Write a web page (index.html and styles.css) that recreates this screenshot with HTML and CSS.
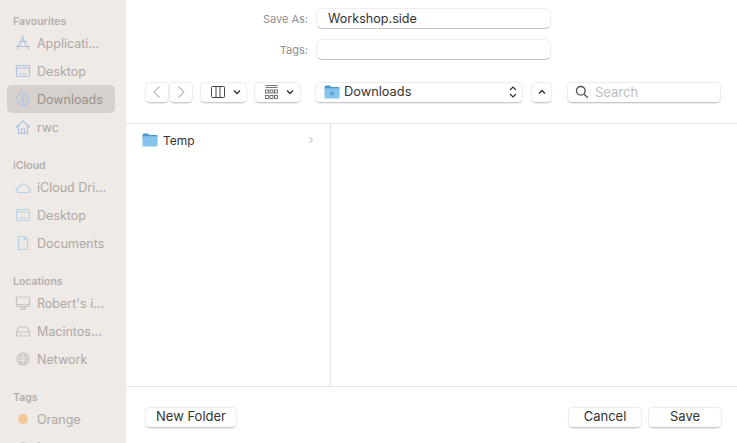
FILE: index.html
```html
<!DOCTYPE html>
<html lang="en">
<head>
    <meta charset="UTF-8">
    <title>Save As</title>
    <link rel="stylesheet" href="styles.css">
</head>
<body>
    <div class="dialog">
        <aside class="sidebar">
            <div class="section">
                <h2>Favourites</h2>
                <div class="item">
                    <svg class="side-icon blue" viewBox="0 0 18 18"><path d="M9.5 2.5 L4.5 12.5 M7.5 2.5 L13 12.5 M2 12.5 H16 M5 7.5 H13 M3 15.5 L4.5 12.5 M15 15.5 L13 12.5"/></svg>
                    <span>Applicati...</span>
                </div>
                <div class="item">
                    <svg class="side-icon blue" viewBox="0 0 18 18"><rect x="2.5" y="3.5" width="13" height="11" rx="1.5"/><path d="M3 6 H15 M5.5 12 H12.5"/></svg>
                    <span>Desktop</span>
                </div>
                <div class="item selected">
                    <svg class="side-icon blue" viewBox="0 0 18 18"><circle cx="9" cy="9" r="6"/><path d="M9 5.5 V12 M6.5 9.7 L9 12.2 L11.5 9.7"/></svg>
                    <span>Downloads</span>
                </div>
                <div class="item">
                    <svg class="side-icon blue" viewBox="0 0 18 18"><path d="M2 9.5 L9 3 L16 9.5 M4.5 8 V15.5 H13.5 V8 M7.5 15.5 V11 H10.5 V15.5"/></svg>
                    <span>rwc</span>
                </div>
            </div>
            <div class="section">
                <h2>iCloud</h2>
                <div class="item">
                    <svg class="side-icon sky" viewBox="0 0 18 18"><path d="M5 14.5 H13.5 C17 14.5 17 10 14 9.5 C13.8 6.5 10 4.5 7.5 7.5 C5.5 6.8 4.5 8.5 4.7 9.7 C1.2 10.3 1.5 14.5 5 14.5 Z"/></svg>
                    <span>iCloud Dri...</span>
                </div>
                <div class="item">
                    <svg class="side-icon sky" viewBox="0 0 18 18"><rect x="2.5" y="3.5" width="13" height="11" rx="1.5"/><path d="M3 6 H15 M5.5 12 H12.5"/></svg>
                    <span>Desktop</span>
                </div>
                <div class="item">
                    <svg class="side-icon sky" viewBox="0 0 18 18"><path d="M4.5 2.5 H10.5 L13.5 5.5 V15.5 H4.5 Z M10.5 2.5 V5.5 H13.5"/></svg>
                    <span>Documents</span>
                </div>
            </div>
            <div class="section">
                <h2>Locations</h2>
                <div class="item">
                    <svg class="side-icon grey" viewBox="0 0 18 18"><rect x="2.5" y="3" width="13" height="9.5" rx="1"/><path d="M2.5 10.5 H15.5 M7.5 12.5 V15 M10.5 12.5 V15 M6 15.2 H12"/></svg>
                    <span>Robert's i...</span>
                </div>
                <div class="item">
                    <svg class="side-icon grey" viewBox="0 0 18 18"><path d="M2.5 10 L5 5 H13 L15.5 10 V14 H2.5 Z M2.5 10 H15.5 M6 12 H8"/></svg>
                    <span>Macintos...</span>
                </div>
                <div class="item">
                    <svg class="side-icon grey" viewBox="0 0 18 18"><circle cx="9" cy="9" r="6"/><ellipse cx="9" cy="9" rx="2.8" ry="6"/><path d="M3 9 H15 M4 5.8 H14 M4 12.2 H14"/></svg>
                    <span>Network</span>
                </div>
            </div>
            <div class="section">
                <h2>Tags</h2>
                <div class="item">
                    <span class="tag-dot orange"></span>
                    <span>Orange</span>
                </div>
                <div class="item">
                    <span class="tag-dot dim"></span>
                    <span>Important</span>
                </div>
            </div>
        </aside>

        <main class="panel">
            <div class="form">
                <div class="form-row">
                    <label>Save As:</label>
                    <div class="field name-field">Workshop.side</div>
                </div>
                <div class="form-row">
                    <label>Tags:</label>
                    <div class="field"></div>
                </div>
            </div>

            <div class="toolbar">
                <div class="nav-pair">
                    <div class="btn nav-btn">
                        <svg class="tool-icon faint" viewBox="0 0 12 14"><path d="M8.5 1.5 L3 7 L8.5 12.5"/></svg>
                    </div>
                    <div class="btn nav-btn">
                        <svg class="tool-icon faint" viewBox="0 0 12 14"><path d="M3.5 1.5 L9 7 L3.5 12.5"/></svg>
                    </div>
                </div>
                <div class="btn view-btn">
                    <svg class="col-icon" viewBox="0 0 14 12"><rect x="0.5" y="0.5" width="13" height="11" rx="1"/><path d="M5 0.5 V11.5 M9 0.5 V11.5"/></svg>
                    <svg class="chevron" viewBox="0 0 8 6"><path d="M1 1.5 L4 4.5 L7 1.5"/></svg>
                </div>
                <div class="btn group-btn">
                    <svg class="grid-icon" viewBox="0 0 13 14"><path d="M0.5 0.5 H12.5 M0.5 2.5 H12.5"/><rect x="0.5" y="5" width="3" height="3"/><rect x="5" y="5" width="3" height="3"/><rect x="9.5" y="5" width="3" height="3"/><rect x="0.5" y="10.5" width="3" height="3"/><rect x="5" y="10.5" width="3" height="3"/><rect x="9.5" y="10.5" width="3" height="3"/></svg>
                    <svg class="chevron" viewBox="0 0 8 6"><path d="M1 1.5 L4 4.5 L7 1.5"/></svg>
                </div>
                <div class="btn path-btn">
                    <svg class="folder" viewBox="0 0 16 14"><path class="folder-back" d="M0.5 2 Q0.5 0.5 2 0.5 H6 L7.5 2 H14.5 Q15.5 2 15.5 3 V5 H0.5 Z"/><rect class="folder-front" x="0.5" y="3.2" width="15" height="10.3" rx="1"/><circle class="folder-mark" cx="8" cy="8.4" r="2"/></svg>
                    <span class="path-name">Downloads</span>
                    <svg class="updown" viewBox="0 0 8 14"><path d="M1 5 L4 2 L7 5 M1 9 L4 12 L7 9"/></svg>
                </div>
                <div class="btn up-btn">
                    <svg class="chevron" viewBox="0 0 8 6"><path d="M1 4.5 L4 1.5 L7 4.5"/></svg>
                </div>
                <div class="btn search-box">
                    <svg class="search-icon" viewBox="0 0 14 14"><circle cx="5.8" cy="5.8" r="4.3"/><path d="M9 9 L12.8 12.8"/></svg>
                    <span>Search</span>
                </div>
            </div>

            <div class="browser">
                <div class="column">
                    <div class="file-row">
                        <svg class="folder" viewBox="0 0 16 14"><path class="folder-back" d="M0.5 2 Q0.5 0.5 2 0.5 H6 L7.5 2 H14.5 Q15.5 2 15.5 3 V5 H0.5 Z"/><rect class="folder-front" x="0.5" y="3.2" width="15" height="10.3" rx="1"/></svg>
                        <span class="file-name">Temp</span>
                        <svg class="row-arrow" viewBox="0 0 6 8"><path d="M1.5 1 L4.5 4 L1.5 7"/></svg>
                    </div>
                </div>
                <div class="column-rest"></div>
            </div>

            <div class="footer">
                <div class="btn text-btn new-folder">New Folder</div>
                <div class="footer-right">
                    <div class="btn text-btn action">Cancel</div>
                    <div class="btn text-btn action">Save</div>
                </div>
            </div>
        </main>
    </div>
</body>
</html>
```

FILE: styles.css
```css
html, body {
    margin: 0;
    height: 100%;
    overflow: hidden;
    background-color: #fff;
    font-family: Inter, "Liberation Sans", sans-serif;
}
.dialog {
    display: flex;
    height: 443px;
    overflow: hidden;
}

/* Sidebar */
.sidebar {
    width: 126px;
    flex: none;
    box-sizing: border-box;
    padding: 13px 0 0 7px;
    background-color: #efeae6;
    overflow: hidden;
}
.section {
    margin-bottom: 16px;
}
.section h2 {
    margin: 0 0 0 6px;
    height: 16px;
    line-height: 18px;
    font-size: 10.5px;
    font-weight: 600;
    color: #b4afab;
}
.item {
    display: flex;
    align-items: center;
    gap: 5px;
    width: 108px;
    height: 28px;
    box-sizing: border-box;
    padding-left: 7px;
    border-radius: 5px;
    font-size: 12.5px;
    color: #aca8a4;
    white-space: nowrap;
}
.item.selected {
    background-color: #d6d1cc;
    color: #96928e;
}
.side-icon {
    width: 18px;
    height: 18px;
    flex: none;
    fill: none;
    stroke-width: 1.2;
}
.side-icon.blue { stroke: #aec3e4; }
.side-icon.sky { stroke: #b6d2e6; }
.side-icon.grey { stroke: #c9c5c2; }
.tag-dot {
    width: 10px;
    height: 10px;
    margin: 0 4px;
    flex: none;
    border-radius: 50%;
}
.tag-dot.orange { background-color: #f3c795; }
.tag-dot.dim { background-color: #cfcbc8; }

/* Main panel */
.panel {
    flex: 1;
    min-width: 0;
    display: flex;
    flex-direction: column;
}
.form {
    display: flex;
    flex-direction: column;
    gap: 10px;
    padding-top: 8px;
}
.form-row {
    display: flex;
    align-items: center;
    height: 21px;
}
.form-row label {
    width: 182px;
    text-align: right;
    font-size: 11px;
    color: #8e8e8e;
}
.field {
    width: 235px;
    height: 21px;
    box-sizing: border-box;
    margin-left: 8px;
    padding-left: 11px;
    line-height: 19px;
    font-size: 12.6px;
    color: #333;
    border: 1px solid #ededed;
    border-bottom-color: #c4c4c4;
    border-radius: 6px;
}
.toolbar {
    display: flex;
    align-items: center;
    height: 22px;
    padding: 21px 0 20px 19px;
    border-bottom: 1px solid #e3e3e3;
}
.btn {
    display: flex;
    align-items: center;
    box-sizing: border-box;
    background-color: #fff;
    border: 1px solid #ededed;
    border-bottom-color: #c9c9c9;
    border-radius: 5px;
    box-shadow: 0 0.5px 1px rgba(0, 0, 0, 0.08);
}
.nav-pair {
    display: flex;
}
.nav-btn {
    width: 24px;
    height: 21px;
    justify-content: center;
}
.tool-icon {
    width: 12px;
    height: 14px;
    fill: none;
    stroke-width: 1.1;
}
.tool-icon.faint { stroke: #b9b9b9; }
.view-btn {
    width: 47px;
    height: 21px;
    margin-left: 7px;
    padding-left: 10px;
    gap: 8px;
}
.group-btn {
    width: 47px;
    height: 21px;
    margin-left: 7px;
    padding-left: 10px;
    gap: 8px;
}
.col-icon {
    width: 14px;
    height: 12px;
    fill: none;
    stroke: #444;
    stroke-width: 1;
}
.grid-icon {
    width: 13px;
    height: 14px;
    fill: none;
    stroke: #555;
    stroke-width: 0.8;
}
.chevron {
    width: 8px;
    height: 6px;
    fill: none;
    stroke: #333;
    stroke-width: 1.4;
}
.path-btn {
    width: 208px;
    height: 21px;
    margin-left: 14px;
    padding: 0 5px 0 8px;
}
.folder {
    width: 16px;
    height: 14px;
    flex: none;
}
.folder-back { fill: #4f97c9; }
.folder-front { fill: #84c4ec; }
.folder-mark { fill: #5ba4d6; }
.path-name {
    flex: 1;
    margin-left: 4px;
    padding-bottom: 2px;
    font-size: 12.8px;
    color: #333;
}
.updown {
    width: 8px;
    height: 14px;
    fill: none;
    stroke: #333;
    stroke-width: 1.2;
}
.up-btn {
    width: 21px;
    height: 21px;
    margin-left: 8px;
    justify-content: center;
}
.search-box {
    width: 154px;
    height: 21px;
    margin-left: 15px;
    padding-left: 7px;
    gap: 6px;
    font-size: 13px;
    color: #bdbdbd;
}
.search-icon {
    width: 14px;
    height: 14px;
    flex: none;
    fill: none;
    stroke: #555;
    stroke-width: 1.4;
}

/* File browser */
.browser {
    flex: 1;
    min-height: 0;
    display: flex;
    border-bottom: 1px solid #e3e3e3;
}
.column {
    width: 205px;
    flex: none;
    box-sizing: border-box;
    padding: 7px 0 0 16px;
    border-right: 1px solid #e3e3e3;
}
.column-rest {
    flex: 1;
}
.file-row {
    display: flex;
    align-items: center;
    height: 18px;
    padding-right: 16px;
}
.file-name {
    flex: 1;
    margin-left: 5px;
    font-size: 12px;
    color: #333;
}
.row-arrow {
    width: 6px;
    height: 8px;
    fill: none;
    stroke: #aaa;
    stroke-width: 1;
}

/* Footer */
.footer {
    display: flex;
    align-items: flex-start;
    justify-content: space-between;
    height: 56px;
    flex: none;
    box-sizing: border-box;
    padding: 20px 15px 0 19px;
}
.footer-right {
    display: flex;
    gap: 6px;
}
.text-btn {
    justify-content: center;
    height: 21px;
    padding-bottom: 3px;
    font-size: 13px;
    color: #333;
}
.new-folder {
    width: 92px;
}
.action {
    width: 74px;
}
```
